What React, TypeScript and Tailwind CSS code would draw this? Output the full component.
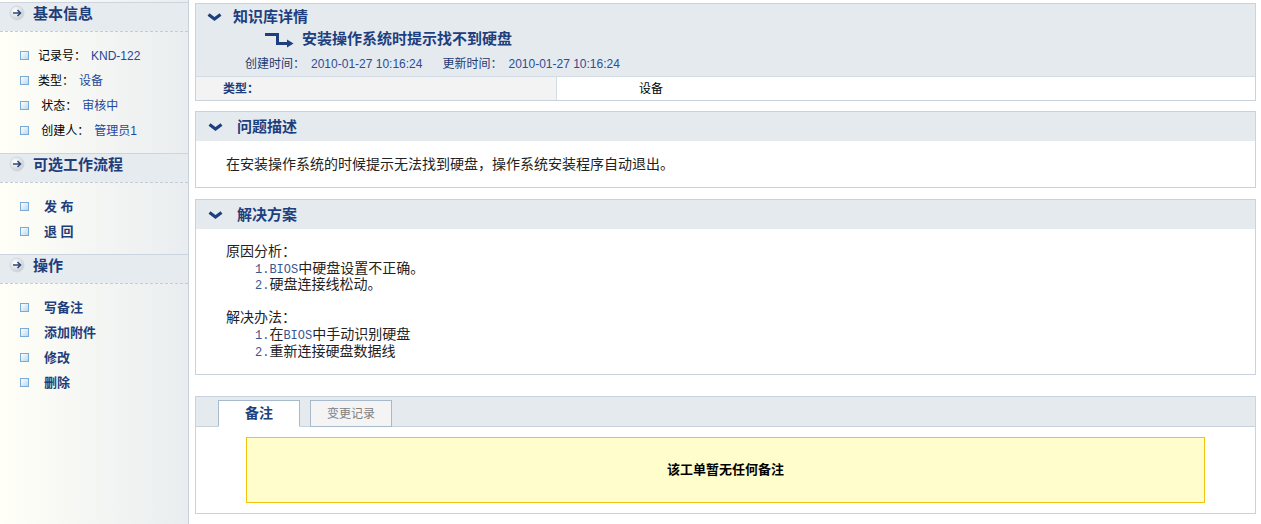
import React from "react";

const FONT = "font-['Liberation_Sans','Noto_Sans_CJK_SC',sans-serif]";

function CircleArrow() {
  return (
    <svg width="16" height="16" viewBox="0 0 16 16" className="shrink-0">
      <defs>
        <radialGradient id="ca-g" cx="38%" cy="35%" r="70%">
          <stop offset="0" stopColor="#ffffff" />
          <stop offset="1" stopColor="#c5cbd4" />
        </radialGradient>
      </defs>
      <circle cx="8" cy="8" r="7" fill="url(#ca-g)" stroke="#d3d8df" strokeWidth="1" />
      <path d="M4 8 H11.5 M8.5 5 L11.5 8 L8.5 11" fill="none" stroke="#2c4a78" strokeWidth="1.6" />
    </svg>
  );
}

function Chevron() {
  return (
    <svg width="15" height="8" viewBox="0 0 15 8" className="shrink-0">
      <path d="M1.5 1.5 L7.5 6 L13.5 1.5" fill="none" stroke="#1d3f7e" strokeWidth="3.2" />
    </svg>
  );
}

function RouteArrow() {
  return (
    <svg width="29" height="15" viewBox="0 0 29 15" className="shrink-0 mt-[2px]">
      <path d="M0 1.5 H12.5 V10.5 H23" fill="none" stroke="#1d3f7e" strokeWidth="3" />
      <path d="M22 6.5 L28.5 10.5 L22 14.5 Z" fill="#1d3f7e" />
    </svg>
  );
}

function Box() {
  return (
    <span className="w-[9px] h-[9px] shrink-0 border border-[#7aaad6] bg-linear-to-br from-white to-[#bcd8f0]" />
  );
}

function SideHeader({ title }: { title: string }) {
  return (
    <div>
      <div className="flex items-start h-[29px] border-t border-[#cbd4df] bg-[#e6ebf0] pl-[9px] pt-[2px]">
        <CircleArrow />
        <span className="ml-[8px] text-[15px] leading-[18px] font-bold text-[#1e3e7a]">{title}</span>
      </div>
      <div className="border-t border-dashed border-[#c3cdd9]" />
    </div>
  );
}

function PanelHeader({ title }: { title: string }) {
  return (
    <div className="flex items-center h-[29px] bg-[#e5eaef] pl-[12px]">
      <Chevron />
      <span className="ml-[14px] text-[15px] leading-[18px] font-bold text-[#1e3e7d]">{title}</span>
    </div>
  );
}

function Mono({ children }: { children: React.ReactNode }) {
  return (
    <span className="font-['Liberation_Mono',monospace] text-[12px] leading-[16px] text-[#3a5690]">{children}</span>
  );
}

const info = [
  { label: "记录号：", value: "KND-122" },
  { label: "类型：", value: "设备" },
  { label: " 状态：", value: "审核中" },
  { label: " 创建人：", value: "管理员1" },
];

export default function App() {
  return (
    <div className={`flex min-h-screen bg-white text-[12px] ${FONT}`}>
      {/* sidebar */}
      <div className="w-[189px] shrink-0 border-r border-[#c7d1dd] bg-linear-to-r from-[#fffff7] to-[#eaedf0] pt-[2px]">
        <SideHeader title="基本信息" />
        <div className="pt-[11px] pb-[10px]">
          {info.map((it) => (
            <div key={it.label} className="flex items-center h-[25px] pl-[20px]">
              <Box />
              <span className="ml-[9px] whitespace-pre text-black">{it.label}</span>
              <span className="ml-[5px] text-[#24479a]">{it.value}</span>
            </div>
          ))}
        </div>

        <SideHeader title="可选工作流程" />
        <div className="pt-[11px] pb-[10px]">
          {["发 布", "退 回"].map((t) => (
            <div key={t} className="flex items-center h-[25px] pl-[20px]">
              <Box />
              <span className="ml-[15px] whitespace-pre text-[13px] font-bold text-[#1e3e7a]">{t}</span>
            </div>
          ))}
        </div>

        <SideHeader title="操作" />
        <div className="pt-[11px] pb-[10px]">
          {["写备注", "添加附件", "修改", "删除"].map((t) => (
            <div key={t} className="flex items-center h-[25px] pl-[20px]">
              <Box />
              <span className="ml-[15px] text-[13px] font-bold text-[#1e3e7a]">{t}</span>
            </div>
          ))}
        </div>
      </div>

      {/* main */}
      <div className="flex-1 ml-[6px] mr-[5px] pt-[3px]">
        {/* detail */}
        <div className="border border-[#c9d3de]">
          <div className="h-[72px] bg-[#e5eaef] pt-[4px]">
            <div className="flex items-center h-[18px] pl-[11px]">
              <Chevron />
              <span className="ml-[11px] text-[15px] leading-[18px] font-bold text-[#1e3e7d]">知识库详情</span>
            </div>
            <div className="flex items-center h-[18px] mt-[4px] pl-[69px]">
              <RouteArrow />
              <span className="ml-[8px] text-[15px] leading-[18px] font-bold text-[#1e3e7d]">
                安装操作系统时提示找不到硬盘
              </span>
            </div>
            <div className="flex items-center h-[16px] mt-[8px] pl-[49px] leading-[16px]">
              <span className="text-[#1e3a72]">创建时间：</span>
              <span className="ml-[6px] text-[#2f4d93]">2010-01-27 10:16:24</span>
              <span className="ml-[20px] text-[#1e3a72]">更新时间：</span>
              <span className="ml-[6px] text-[#2f4d93]">2010-01-27 10:16:24</span>
            </div>
          </div>
          <div className="flex h-[24px] border-t border-[#d3dbe4]">
            <div className="flex items-center w-[361px] bg-[#f3f3f3] border-r border-[#d3dbe4] pl-[27px] font-bold text-[#1e3e7a]">
              类型：
            </div>
            <div className="flex items-center flex-1 pl-[82px] text-black">设备</div>
          </div>
        </div>

        {/* problem */}
        <div className="mt-[10px] border border-[#c9d3de]">
          <PanelHeader title="问题描述" />
          <div className="px-[30px] py-[14px] text-[14px] leading-[18px] text-[#222]">
            在安装操作系统的时候提示无法找到硬盘，操作系统安装程序自动退出。
          </div>
        </div>

        {/* solution */}
        <div className="mt-[11px] border border-[#c9d3de]">
          <PanelHeader title="解决方案" />
          <div className="pl-[30px] pt-[14px] pb-[15px] text-[14px] leading-[16px] text-[#222]">
            <div className="h-[16.6px]">原因分析：</div>
            <div className="h-[16.6px] pl-[29px]">
              <Mono>1.BIOS</Mono>中硬盘设置不正确。
            </div>
            <div className="h-[16.6px] pl-[29px]">
              <Mono>2.</Mono>硬盘连接线松动。
            </div>
            <div className="h-[16.6px]" />
            <div className="h-[16.6px]">解决办法：</div>
            <div className="h-[16.6px] pl-[29px]">
              <Mono>1.</Mono>在<Mono>BIOS</Mono>中手动识别硬盘
            </div>
            <div className="h-[16.6px] pl-[29px]">
              <Mono>2.</Mono>重新连接硬盘数据线
            </div>
          </div>
        </div>

        {/* notes */}
        <div className="mt-[21px] border border-[#c9d3de]">
          <div className="flex items-end h-[30px] bg-[#e5eaef] border-b border-[#c9d3de] pl-[22px]">
            <div className="flex items-center justify-center w-[82px] h-[27px] -mb-px bg-white border border-[#a9b9cc] border-b-white text-[14px] font-bold text-[#1e3e7d]">
              备注
            </div>
            <div className="flex items-center justify-center w-[82px] h-[27px] -mb-px ml-[10px] bg-[#f4f4f4] border border-[#a9b9cc] text-[12px] text-[#808080]">
              变更记录
            </div>
          </div>
          <div className="py-[10px]">
            <div className="flex items-center justify-center mx-[50px] h-[66px] border border-[#f2c40f] bg-[#fefdcb] text-[13px] font-bold text-black">
              该工单暂无任何备注
            </div>
          </div>
        </div>
      </div>
    </div>
  );
}
